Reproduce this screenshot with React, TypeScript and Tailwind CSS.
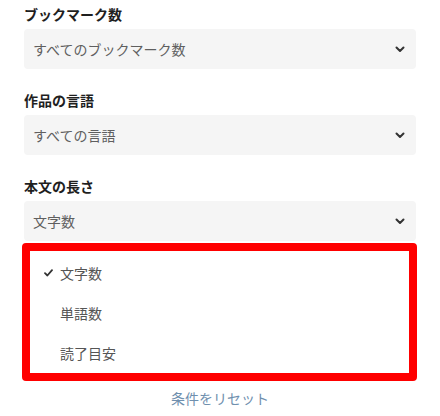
import React from "react";

const Chevron = () => (
  <svg width="10" height="7" viewBox="0 0 10 7" fill="none">
    <path d="M1.5 1.5 L5 5 L8.5 1.5" stroke="#333333" strokeWidth="2" strokeLinecap="round" strokeLinejoin="round" />
  </svg>
);

const Check = () => (
  <svg width="9" height="8" viewBox="0 0 9 8" fill="none">
    <path d="M1 4.2 L3.4 6.5 L8 1.2" stroke="#333333" strokeWidth="1.8" strokeLinecap="round" strokeLinejoin="round" />
  </svg>
);

function Field({ label, value }: { label: string; value: string }) {
  return (
    <div className="flex flex-col gap-[5px]">
      <div className="h-5 text-[14px] leading-5 font-bold text-[#1f1f1f]">{label}</div>
      <div className="h-10 rounded bg-[#f5f5f5] flex items-center justify-between pl-[9px] pr-[11px]">
        <span className="text-[14px] text-[#5f5f5f]">{value}</span>
        <Chevron />
      </div>
    </div>
  );
}

export default function App() {
  return (
    <div
      className="w-[440px] h-[416px] bg-white relative overflow-hidden"
      style={{ fontFamily: '"Noto Sans CJK JP", "Noto Sans", sans-serif' }}
    >
      <div className="px-6 pt-1 flex flex-col gap-[21px]">
        <Field label="ブックマーク数" value="すべてのブックマーク数" />
        <Field label="作品の言語" value="すべての言語" />
        <Field label="本文の長さ" value="文字数" />
      </div>
      <div className="ml-[22px] mt-[2px] w-[395px] h-[138px] border-8 border-[#ff0000] rounded bg-white pt-[2px] flex flex-col">
        <div className="h-10 flex items-center pl-[14px] gap-[7px]">
          <Check />
          <span className="text-[14px] text-[#555555]">文字数</span>
        </div>
        <div className="h-10 flex items-center pl-[30px]">
          <span className="text-[14px] text-[#555555]">単語数</span>
        </div>
        <div className="h-10 flex items-center pl-[30px]">
          <span className="text-[14px] text-[#555555]">読了目安</span>
        </div>
      </div>
      <div className="mt-[7px] h-5 text-center text-[14px] leading-5 text-[#6f8fae]">条件をリセット</div>
    </div>
  );
}
